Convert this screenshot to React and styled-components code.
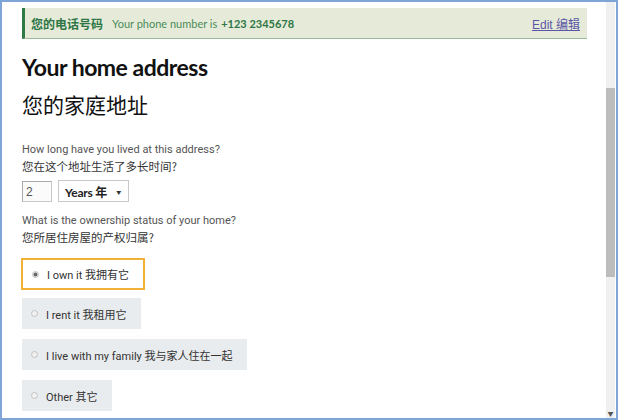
import React from "react";
import styled, { createGlobalStyle } from "styled-components";

const Global = createGlobalStyle`
  html, body { margin: 0; padding: 0; background: #ffffff; }
  body { font-family: Lato, "Noto Sans CJK SC", sans-serif; }
  * { box-sizing: border-box; }
`;

const Frame = styled.div`
  width: 618px;
  height: 420px;
  border: 2px solid #7fa4d8;
  display: flex;
  background: #fff;
  overflow: hidden;
`;

const Content = styled.div`
  flex: 1;
  padding: 6px 19px 0 20px;
  min-width: 0;
`;

const Banner = styled.div`
  height: 31px;
  display: flex;
  align-items: center;
  background: #e6ebd9;
  border-left: 3px solid #2f7a46;
  border-bottom: 1px solid #9dbb9f;
  padding: 0 7px 0 6px;
  font-size: 11px;
  color: #4a8b5a;
`;

const BannerLabel = styled.span`
  font-weight: 700;
  font-size: 12px;
  color: #2e7645;
  margin-right: 9px;
`;

const BannerNumber = styled.span`
  font-weight: 700;
  color: #2e7645;
  margin-left: 4px;
`;

const EditLink = styled.a`
  margin-left: auto;
  color: #5a56a6;
  text-decoration: underline;
  font-family: "Liberation Sans", "Noto Sans CJK SC", sans-serif;
  font-size: 12px;
`;

const Heading = styled.h1`
  margin: 14px 0 0;
  font-size: 23px;
  line-height: 28px;
  font-weight: 700;
  color: #111;
  letter-spacing: -0.5px;
`;

const CnHeading = styled.h2`
  margin: 9px 0 0;
  font-family: "Noto Sans CJK SC", sans-serif;
  font-size: 21px;
  line-height: 28px;
  font-weight: 400;
  color: #111;
`;

const Question = styled.div`
  margin-top: ${(p) => p.$top}px;
  font-family: Roboto, "Noto Sans CJK SC", sans-serif;
  font-size: 11px;
  line-height: 16px;
  color: #555;
`;

const CnLine = styled.div`
  font-family: "Noto Sans CJK SC", sans-serif;
  font-size: 11.5px;
  line-height: 16px;
  color: #333;
`;

const InputRow = styled.div`
  display: flex;
  gap: 6px;
  margin-top: 6px;
  align-items: center;
`;

const NumberBox = styled.div`
  width: 30px;
  height: 21px;
  border: 1px solid #c8c8c8;
  border-top-color: #a9a9a9;
  border-left-color: #a9a9a9;
  background: #fbfbfb;
  font-family: "Liberation Sans", sans-serif;
  font-size: 12px;
  color: #555;
  padding: 3px 0 0 3px;
`;

const SelectBox = styled.div`
  width: 71px;
  height: 22px;
  border: 1px solid #c9c9c9;
  background: #fff;
  display: flex;
  align-items: center;
  padding: 0 7px 0 6px;
  font-family: Lato, "Noto Sans CJK SC", sans-serif;
  font-weight: 700;
  font-size: 12px;
  letter-spacing: -0.2px;
  color: #222;
`;

const Arrow = styled.span`
  margin-left: auto;
  font-size: 5px;
  color: #333;
`;

const Options = styled.div`
  display: flex;
  flex-direction: column;
  align-items: flex-start;
  margin-top: 13px;
`;

const Option = styled.div`
  height: ${(p) => (p.$selected ? 32 : 31)}px;
  display: flex;
  align-items: center;
  gap: 8px;
  padding: 0 14px 0 9px;
  margin: 0 0 ${(p) => (p.$selected ? 8 : 10)}px ${(p) => (p.$selected ? -1 : 0)}px;
  background: ${(p) => (p.$selected ? "#fff" : "#e9ecee")};
  border: ${(p) => (p.$selected ? "2px solid #f2b134" : "none")};
  font-family: Roboto, "Noto Sans CJK SC", sans-serif;
  font-size: 11px;
  color: #333;
`;

const Radio = styled.span`
  width: 7px;
  height: 7px;
  border-radius: 50%;
  border: 1px solid #c4c4c4;
  background: ${(p) => (p.$checked ? "radial-gradient(circle, #666 0 1.6px, #ddd 2.2px)" : "#f0f0f0")};
  flex: none;
`;

const Track = styled.div`
  width: 9px;
  flex: none;
  background: #f0f0f0;
  padding-top: 86px;
  display: flex;
  flex-direction: column;
  align-items: stretch;
  margin-right: 1px;
`;

const Thumb = styled.div`
  height: 189px;
  background: #bdbdbd;
`;

const DownArrow = styled.div`
  margin-top: auto;
  margin-bottom: 1px;
  font-size: 6px;
  line-height: 6px;
  text-align: center;
  color: #555;
`;

const options = [
  { label: "I own it 我拥有它", selected: true },
  { label: "I rent it 我租用它" },
  { label: "I live with my family 我与家人住在一起" },
  { label: "Other 其它" },
];

export default function App() {
  return (
    <>
      <Global />
      <Frame>
        <Content>
          <Banner>
            <BannerLabel>您的电话号码</BannerLabel>
            Your phone number is
            <BannerNumber>+123 2345678</BannerNumber>
            <EditLink href="#">Edit 编辑</EditLink>
          </Banner>
          <Heading>Your home address</Heading>
          <CnHeading>您的家庭地址</CnHeading>
          <Question $top={24}>
            How long have you lived at this address?
            <CnLine>您在这个地址生活了多长时间?</CnLine>
          </Question>
          <InputRow>
            <NumberBox>2</NumberBox>
            <SelectBox>
              Years 年<Arrow>▼</Arrow>
            </SelectBox>
          </InputRow>
          <Question $top={11}>
            What is the ownership status of your home?
            <CnLine>您所居住房屋的产权归属?</CnLine>
          </Question>
          <Options>
            {options.map((o) => (
              <Option key={o.label} $selected={o.selected}>
                <Radio $checked={o.selected} />
                {o.label}
              </Option>
            ))}
          </Options>
        </Content>
        <Track>
          <Thumb />
          <DownArrow>▼</DownArrow>
        </Track>
      </Frame>
    </>
  );
}
